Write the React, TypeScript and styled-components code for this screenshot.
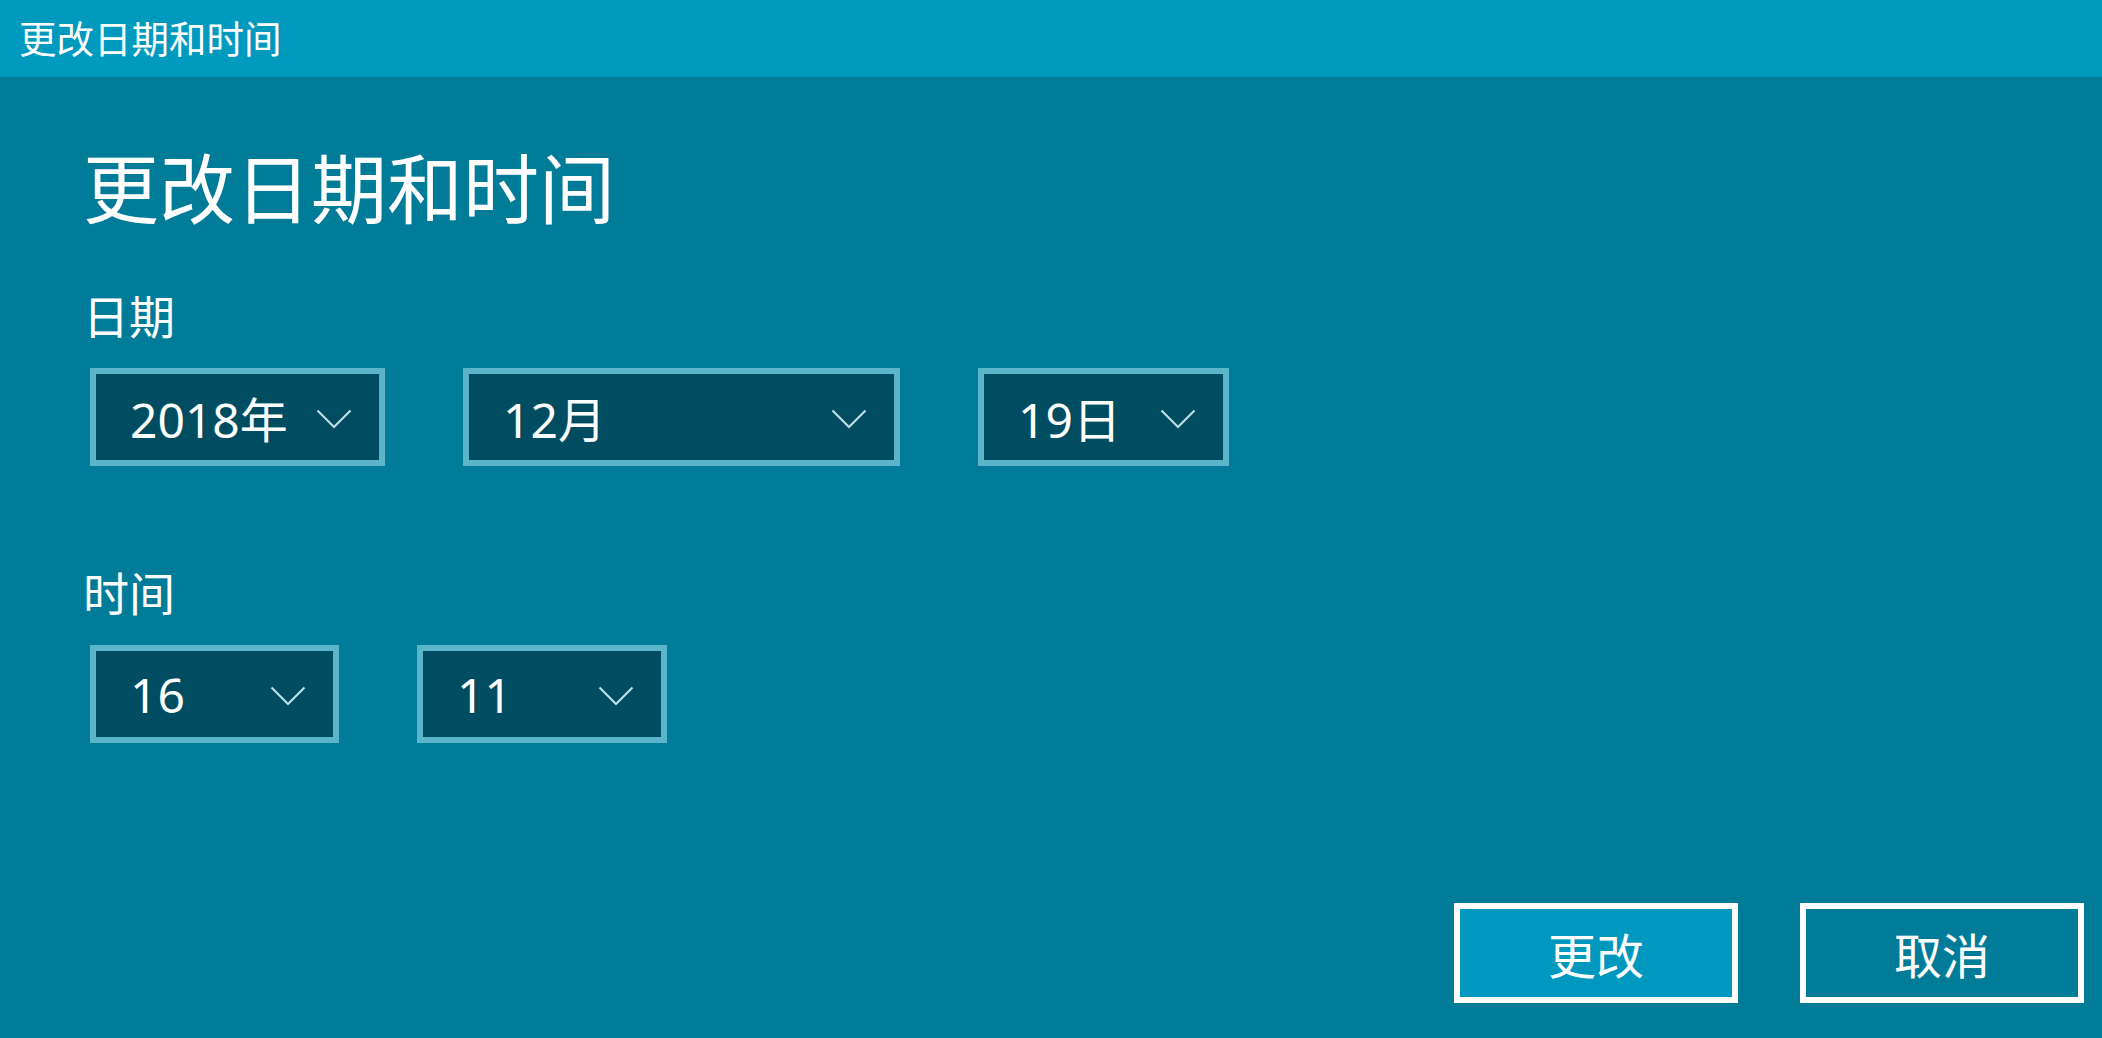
import React from 'react';
import styled, { createGlobalStyle } from 'styled-components';

const GlobalStyle = createGlobalStyle`
    html, body {
        margin: 0;
        padding: 0;
        background: #007c99;
    }
    * {
        box-sizing: border-box;
    }
`;

const Window = styled.div`
    width: 100vw;
    height: 100vh;
    display: flex;
    flex-direction: column;
    background: #007c99;
    color: #ffffff;
    font-family: 'Noto Sans', 'Noto Sans CJK SC', sans-serif;
    overflow: hidden;
`;

const TitleBar = styled.div`
    height: 77px;
    flex-shrink: 0;
    display: flex;
    align-items: center;
    padding-left: 19px;
    padding-bottom: 4px;
    background: #009abf;
    font-size: 37.5px;
`;

const Body = styled.div`
    flex: 1;
    display: flex;
    flex-direction: column;
    padding: 0 18px 35px 83px;
`;

const Heading = styled.h1`
    margin: 62px 0 0;
    font-size: 76px;
    font-weight: 400;
    line-height: 100px;
`;

const Label = styled.div<{ $gap: number }>`
    margin-top: ${p => p.$gap}px;
    font-size: 46px;
    line-height: 60px;
`;

const PickerRow = styled.div`
    display: flex;
    gap: 78px;
    margin: 22px 0 0 7px;
`;

const Picker = styled.div<{ $width: number }>`
    width: ${p => p.$width}px;
    height: 98px;
    display: flex;
    align-items: center;
    justify-content: space-between;
    padding: 0 27px 0 34px;
    background: #004c60;
    border: 6px solid #5ab5ca;
    font-size: 48px;
`;

const Chevron = styled.svg`
    width: 36px;
    height: 20px;
    flex-shrink: 0;
    margin-top: 4px;
`;

const Actions = styled.div`
    margin-top: auto;
    display: flex;
    justify-content: flex-end;
    gap: 62px;
`;

const Button = styled.button<{ $primary?: boolean }>`
    width: 284px;
    height: 100px;
    background: ${p => (p.$primary ? '#0098be' : 'transparent')};
    border: 6px solid #ffffff;
    color: #ffffff;
    font-family: inherit;
    font-size: 48px;
    padding: 0;
`;

const ChevronIcon = () => (
    <Chevron viewBox="0 0 36 20">
        <polyline points="1.5,1.5 18,18 34.5,1.5" fill="none" stroke="#bcdde6" strokeWidth="2.2" />
    </Chevron>
);

const Select = ({ value, width }: { value: string; width: number }) => (
    <Picker $width={width}>
        <span>{value}</span>
        <ChevronIcon />
    </Picker>
);

const App = () => {
    return (
        <Window>
            <GlobalStyle />
            <TitleBar>更改日期和时间</TitleBar>
            <Body>
                <Heading>更改日期和时间</Heading>
                <Label $gap={47}>日期</Label>
                <PickerRow>
                    <Select value="2018年" width={295} />
                    <Select value="12月" width={437} />
                    <Select value="19日" width={251} />
                </PickerRow>
                <Label $gap={97}>时间</Label>
                <PickerRow>
                    <Select value="16" width={249} />
                    <Select value="11" width={250} />
                </PickerRow>
                <Actions>
                    <Button $primary>更改</Button>
                    <Button>取消</Button>
                </Actions>
            </Body>
        </Window>
    );
};

export default App;
